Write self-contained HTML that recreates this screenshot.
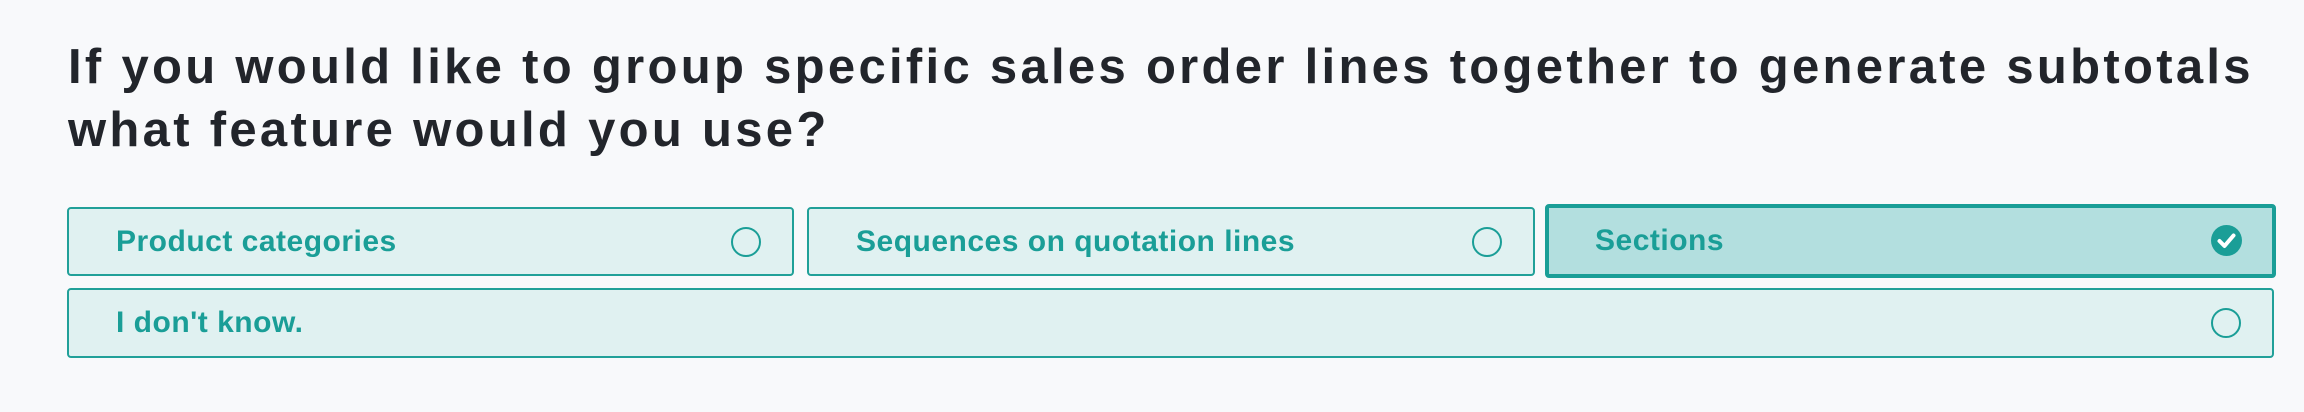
<!DOCTYPE html>
<html><head><meta charset="utf-8"><style>
html,body{margin:0;padding:0;width:2304px;height:412px;background:#f8f9fb;overflow:hidden}
body{font-family:"Liberation Sans",sans-serif;position:relative}
h1{position:absolute;left:68px;top:36px;margin:0;font-size:49px;line-height:63px;font-weight:700;color:#22252b;letter-spacing:3.3px;white-space:nowrap}
.card{position:absolute;box-sizing:border-box;background:#e0f1f1;border:2px solid #21a099;border-radius:4px}
.card span{position:absolute;left:47px;top:50%;transform:translateY(-50%);font-size:30px;letter-spacing:0.5px;font-weight:700;color:#1a9e97}
.card .r{position:absolute;right:31px;top:50%;width:26px;height:26px;margin-top:-15px;border:2px solid #1a9e97;border-radius:50%}
.sel{background:#b3dfdf;border:4px solid #1a9e97}
.sel span{left:46px}
.sel svg{position:absolute;right:30px;top:50%;margin-top:-16px}
</style></head><body>
<h1>If you would like to group specific sales order lines together to generate subtotals<br>what feature would you use?</h1>
<div class="card" style="left:67px;top:207px;width:727px;height:69px"><span>Product categories</span><div class="r"></div></div>
<div class="card" style="left:807px;top:207px;width:728px;height:69px"><span>Sequences on quotation lines</span><div class="r"></div></div>
<div class="card sel" style="left:1545px;top:204px;width:731px;height:74px"><span>Sections</span>
<svg width="31" height="31" viewBox="0 0 31 31"><circle cx="15.5" cy="15.5" r="15.5" fill="#1a9e97"/><path d="M8.5 16 L13.5 21 L22.5 10.5" stroke="#fff" stroke-width="4" fill="none" stroke-linecap="round" stroke-linejoin="round"/></svg></div>
<div class="card" style="left:67px;top:288px;width:2207px;height:70px"><span>I don't know.</span><div class="r"></div></div>
</body></html>
